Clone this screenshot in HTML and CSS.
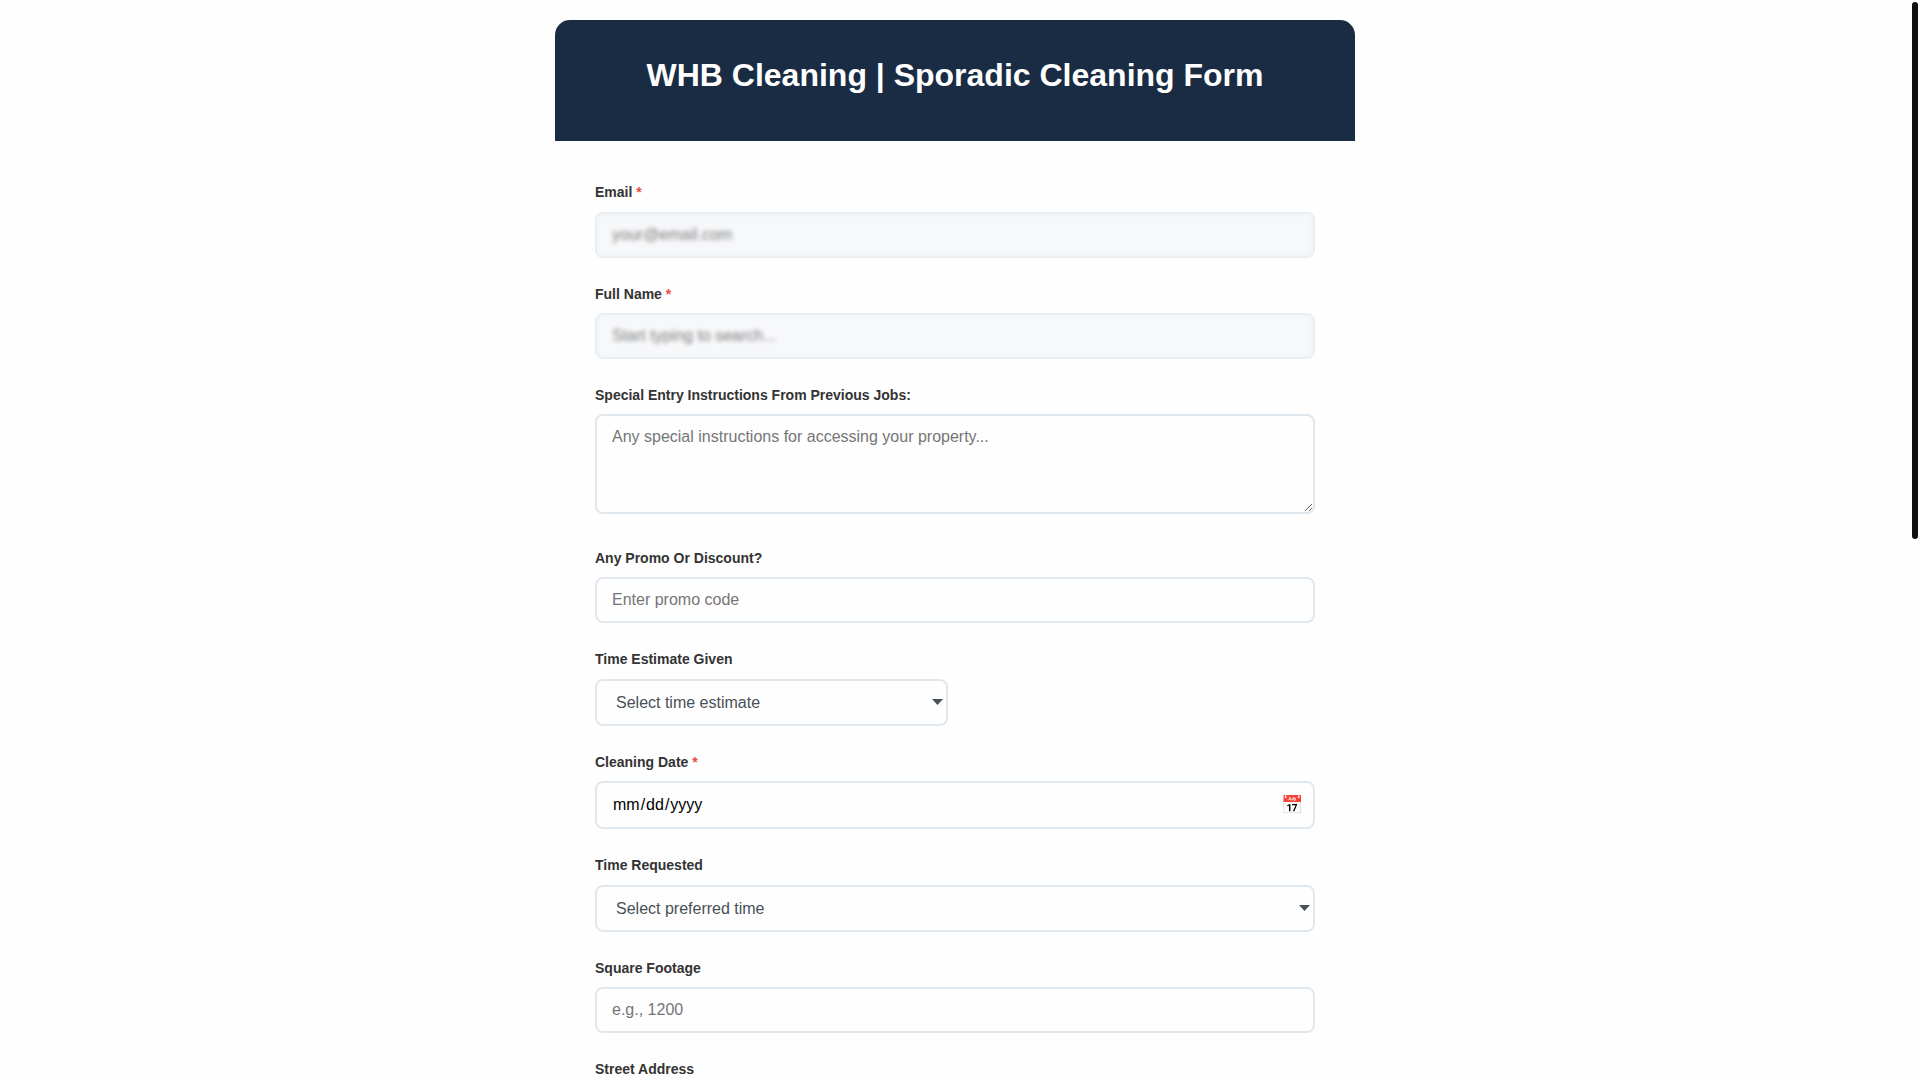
FILE: index.html
```
<!DOCTYPE html>
<html lang="en">
<head>
  <meta charset="UTF-8">
  <meta name="viewport" content="width=device-width, initial-scale=1.0">
  <title>WHB Cleaning | Sporadic Cleaning Form</title>
  <link rel="stylesheet" href="styles.css">
</head>
<body>
  <div class="page">
    <div class="container">
      <header class="header">
        <h1>WHB Cleaning | Sporadic Cleaning Form</h1>
      </header>

      <form class="form">
        <div class="form-group">
          <label for="email">Email <span class="required">*</span></label>
          <div class="locked">
            <input type="email" id="email" name="email" placeholder="your@email.com" required>
          </div>
        </div>

        <div class="form-group">
          <label for="fullName">Full Name <span class="required">*</span></label>
          <div class="locked">
            <input type="text" id="fullName" name="fullName" placeholder="Start typing to search..." required>
          </div>
        </div>

        <div class="form-group">
          <label for="entryInstructions">Special Entry Instructions From Previous Jobs:</label>
          <textarea id="entryInstructions" name="entryInstructions" placeholder="Any special instructions for accessing your property..."></textarea>
        </div>

        <div class="form-group">
          <label for="promo">Any Promo Or Discount?</label>
          <input type="text" id="promo" name="promo" placeholder="Enter promo code">
        </div>

        <div class="form-group">
          <label for="timeEstimate">Time Estimate Given</label>
          <div class="row">
            <select id="timeEstimate" name="timeEstimate">
              <option value="">Select time estimate</option>
            </select>
          </div>
        </div>

        <div class="form-group">
          <label for="cleaningDate">Cleaning Date <span class="required">*</span></label>
          <div class="date-wrapper">
            <input type="date" id="cleaningDate" name="cleaningDate" required>
            <span class="date-icon">📅</span>
          </div>
        </div>

        <div class="form-group">
          <label for="timeRequested">Time Requested</label>
          <select id="timeRequested" name="timeRequested">
            <option value="">Select preferred time</option>
          </select>
        </div>

        <div class="form-group">
          <label for="squareFootage">Square Footage</label>
          <input type="number" id="squareFootage" name="squareFootage" placeholder="e.g., 1200">
        </div>

        <div class="form-group">
          <label for="streetAddress">Street Address</label>
          <input type="text" id="streetAddress" name="streetAddress">
        </div>
      </form>
    </div>
  </div>
  <div class="scroll-thumb"></div>
</body>
</html>
```
FILE: styles.css
```
* {
  margin: 0;
  padding: 0;
  box-sizing: border-box;
}
html {
  scrollbar-width: none;
}
body {
  font-family: "Liberation Sans", Arial, sans-serif;
  line-height: 1.6;
  color: #333;
  background: #fefefe;
}

/* Extra space on the right is the scrollbar gutter */
.page {
  padding: 20px 30px 20px 20px;
}
.scroll-thumb {
  position: fixed;
  top: 2px;
  right: 2px;
  width: 6px;
  height: calc(50vh - 3px);
  background: #0f1113;
  border-radius: 3px;
}

.container {
  max-width: 800px;
  min-height: 196vh;
  margin: 0 auto;
}
.header {
  padding: 30px;
  text-align: center;
  color: white;
  background: #1a2c43;
  border-radius: 15px 15px 0 0;
}
.header h1 {
  font-size: 32px;
  margin-bottom: 10px;
}
.form {
  padding: 40px;
}
.form-group {
  margin-bottom: 25px;
}
label {
  display: block;
  margin-bottom: 8px;
  font-size: 14px;
  font-weight: bold;
}
.required {
  color: #e74c3c;
}

input,
select,
textarea {
  width: 100%;
  padding: 12px 15px;
  font-family: inherit;
  font-size: 16px;
  background: #fefefe;
  border: 2px solid #e1e8ed;
  border-radius: 8px;
}
input,
select {
  display: block;
}
select {
  appearance: none;
  padding: 12px 19px;
  line-height: 19px;
  color: #495057;
  background: #fefefe url("data:image/svg+xml,%3Csvg xmlns='http://www.w3.org/2000/svg' width='11' height='6'%3E%3Cpath d='M0 0h11L5.5 6z' fill='%23495057'/%3E%3C/svg%3E") no-repeat right 3px center;
}
textarea {
  min-height: 100px;
  resize: vertical;
}
textarea::-webkit-scrollbar {
  width: 6px;
  height: 6px;
}
.row {
  display: grid;
  grid-template-columns: 1fr 1fr;
  gap: 15px;
}

/* Frosted cover over the fields that are not open yet */
.locked {
  position: relative;
}
.locked input {
  background: #f8f9fb;
}
.locked::after {
  content: "";
  position: absolute;
  inset: 0;
  border-radius: 8px;
  background: rgba(248, 249, 250, 0.1);
  backdrop-filter: blur(2px);
  pointer-events: none;
}

.date-wrapper {
  position: relative;
}
.date-wrapper input::-webkit-calendar-picker-indicator {
  opacity: 0;
}
.date-icon {
  position: absolute;
  top: 50%;
  right: 12px;
  font-size: 18px;
  transform: translateY(-50%);
  pointer-events: none;
}
```
